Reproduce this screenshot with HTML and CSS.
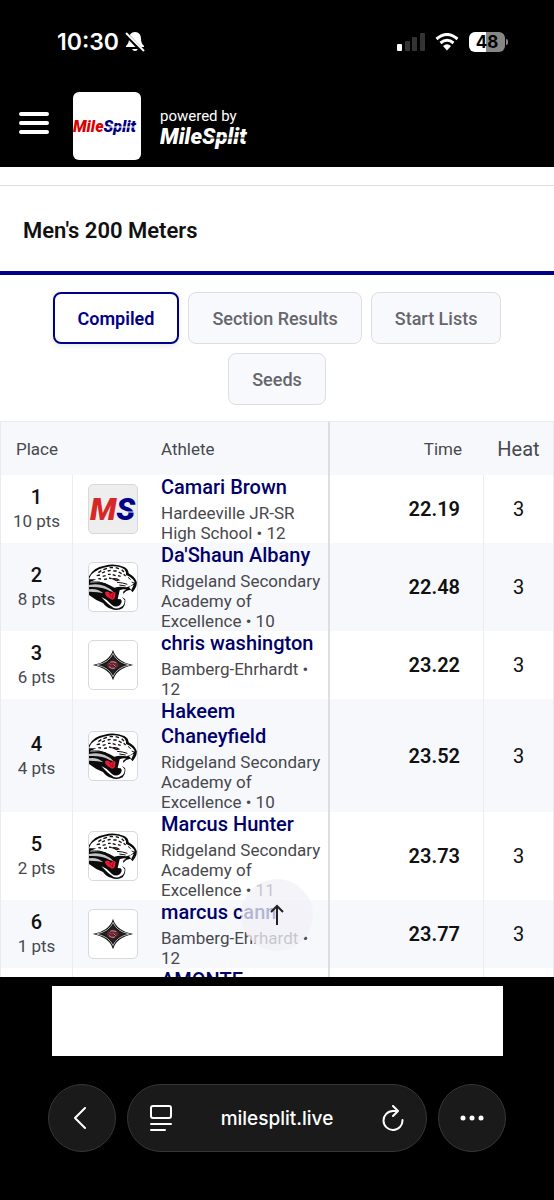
FILE: index.html
```
<!DOCTYPE html>
<html lang="en">

<head>
  <meta charset="UTF-8">
  <meta name="viewport" content="width=device-width, initial-scale=1.0">
  <title>Men's 200 Meters - MileSplit Live</title>
  <link rel="stylesheet" href="styles.css">
</head>

<body>

  <!-- shared logos -->
  <svg class="defs" width="0" height="0" aria-hidden="true">
    <symbol id="jaguar" viewBox="0 0 144 144">
      <path d="M0 40 Q14 12 46 8 Q78 -1 106 12 Q118 18 119 31 Q136 40 143 56 Q145 66 138 77 L131 88 L124 80 L112 84 L103 92 L98 82 L92 98 L108 108 Q112 122 101 136 Q84 145 66 137 Q52 134 42 120 Q20 112 0 96 Z" fill="#0b0b0b"/>
      <path d="M8 34 Q28 15 58 11 Q88 6 106 19 Q113 27 111 36 Q130 43 137 57 Q134 65 124 69 L112 73 Q92 69 76 74 Q48 58 28 58 Q12 60 2 58 L22 49 L0 49 Q4 38 8 34 Z" fill="#fff"/>
      <path d="M0 66 Q26 60 47 69 Q64 76 74 88 L62 84 Q40 70 0 72 Z M0 79 Q24 75 43 91 Q30 86 0 86 Z" fill="#c4c4c4"/>
      <path d="M37 102 Q56 110 68 125 Q80 136 93 126 Q102 116 95 109 L86 108 L92 82 Q105 76 112 80 L104 84 L98 101 L107 112 Q107 128 96 132 Q79 142 67 130 Q55 122 37 102 Z" fill="#fff"/>
      <path d="M48 88 Q58 81 66 93 Q70 84 80 89 L77 106 Q70 114 62 106 Q48 100 48 88 Z" fill="#ee1830"/>
      <path d="M60 91 L68 103 M73 90 L70 106" stroke="#7d0013" stroke-width="2"/>
      <path d="M28 29 l9-6 M43 20 l11-4 M62 14 l10 0 M80 14 l10 3 M98 20 l7 7 M23 38 l10-2 M39 30 l9-4 M56 24 l9-2 M73 24 l10 0 M89 27 l9 5 M41 40 l9-2 M57 34 l8 0 M71 35 l9 3 M87 38 l8 2 M28 47 l8 1 M45 49 l9-1 M60 45 l8 2 M104 34 l6 5" stroke="#111" stroke-width="4" fill="none"/>
      <path d="M66 47 Q80 41 94 52 L82 55 Q76 50 66 47 Z" fill="#111"/>
      <circle cx="82" cy="49" r="3" fill="#c2182b"/>
      <path d="M84 58 Q102 59 115 64 M91 66 L110 69 M117 43 L125 50 M128 57 l7 3 M8 57 Q30 54 51 63" stroke="#111" stroke-width="3" fill="none"/>
      <path d="M120 72 L134 65 L127 81 Z" fill="#fff"/>
    </symbol>
    <symbol id="spartan" viewBox="0 0 144 144">
      <path d="M72 26 Q82 62 133 72 Q82 82 72 118 Q62 82 11 72 Q62 62 72 26 Z" fill="#151515"/>
      <path d="M72 37 Q82 64 121 72 Q82 80 72 107 Q62 80 23 72 Q62 64 72 37 Z" fill="none" stroke="#b5b5b5" stroke-width="3"/>
      <path d="M72 45 Q82 66 105 72 Q82 78 72 99 Q62 78 39 72 Q62 66 72 45 Z" fill="#242024"/>
      <ellipse cx="71" cy="72" rx="17" ry="13" fill="#6d2430"/>
      <path d="M82 65 Q65 59 62 67 Q65 71 75 72 Q84 77 76 82 Q67 84 60 77" fill="none" stroke="#c28b94" stroke-width="3"/>
      <path d="M60 63 L83 82" stroke="#32151c" stroke-width="3"/>
    </symbol>
  </svg>

  <div class="status-bar">
    <div class="status-left">
      <span class="clock">10:30</span>
      <svg width="20" height="22" viewBox="0 0 20 22" aria-hidden="true">
        <path d="M10 1 C6 1 4 4 4 8 C4 11 3 13 1 15 V16 H19 V15 C17 13 16 11 16 8 C16 4 14 1 10 1 Z M7 18 H13 Q12 20 10 20 Q8 20 7 18 Z" fill="#fff"/>
        <path d="M0 2 L18 21" stroke="#000" stroke-width="4"/>
        <path d="M1 2 L19 20" stroke="#fff" stroke-width="2"/>
      </svg>
    </div>
    <div class="status-right">
      <svg width="28" height="18" viewBox="0 0 28 18" aria-hidden="true">
        <rect x="0" y="11" width="5" height="7" rx="1" fill="#fff"/>
        <rect x="8" y="8" width="5" height="10" rx="1" fill="#333"/>
        <rect x="15" y="4" width="5" height="14" rx="1" fill="#333"/>
        <rect x="23" y="0" width="5" height="18" rx="1" fill="#333"/>
      </svg>
      <svg width="24" height="18" viewBox="0 0 24 18" aria-hidden="true">
        <path d="M1.500 6 Q12 -3 22.500 6 M5.500 10 Q12 4.500 18.500 10" fill="none" stroke="#fff" stroke-width="3"/>
        <path d="M8 13 Q12 9.500 16 13 L12 17.500 Z" fill="#fff"/>
      </svg>
      <span class="battery">48</span>
    </div>
  </div>

  <header class="site-header">
    <button class="menu-btn" aria-label="Menu">
      <svg width="30" height="22" viewBox="0 0 30 22">
        <path d="M2 2 H28 M2 11 H28 M2 20 H28" stroke="#fff" stroke-width="4" stroke-linecap="round"/>
      </svg>
    </button>
    <a href="#" class="logo-tile" aria-label="MileSplit home">
      <svg width="68" height="28" viewBox="0 0 68 28">
        <text x="0" y="20" class="logo-small"><tspan fill="#dc0000">Mile</tspan><tspan fill="#00007f">Split</tspan></text>
        <path d="M34 15 H67" stroke="#fff" stroke-width="1"/>
      </svg>
    </a>
    <div class="powered">
      <span class="powered-by">powered by</span>
      <svg width="96" height="28" viewBox="0 0 96 28">
        <text x="0" y="20" class="logo-large">MileSplit</text>
        <path d="M46 14 H90" stroke="#000" stroke-width="1"/>
      </svg>
    </div>
  </header>

  <main class="page">
    <div class="page-scroll">
      <h1>Men's 200 Meters</h1>

      <div class="tabs">
        <button class="tab active">Compiled</button>
        <button class="tab">Section Results</button>
        <button class="tab">Start Lists</button>
        <button class="tab">Seeds</button>
      </div>

      <table class="results">
        <colgroup>
          <col class="col-place">
          <col class="col-logo">
          <col>
          <col class="col-time">
          <col class="col-heat">
        </colgroup>
        <thead>
          <tr>
            <th>Place</th>
            <th></th>
            <th class="athlete">Athlete</th>
            <th class="time">Time</th>
            <th class="heat">Heat</th>
          </tr>
        </thead>
        <tbody>
          <tr>
            <td class="place"><b>1</b><span>10 pts</span></td>
            <td class="logo">
              <svg class="ms" viewBox="0 0 48 48">
                <text x="1" y="35"><tspan fill="#d62828">M</tspan><tspan fill="#00008b">S</tspan></text>
                <path d="M31 27 H46" stroke="#eee" stroke-width="1"/>
              </svg>
            </td>
            <td class="athlete"><a href="#">Camari Brown</a><span>Hardeeville JR-SR High School • 12</span></td>
            <td class="time">22.19</td>
            <td class="heat">3</td>
          </tr>
          <tr>
            <td class="place"><b>2</b><span>8 pts</span></td>
            <td class="logo"><svg><use href="#jaguar"/></svg></td>
            <td class="athlete"><a href="#">Da'Shaun Albany</a><span>Ridgeland Secondary Academy of Excellence • 10</span></td>
            <td class="time">22.48</td>
            <td class="heat">3</td>
          </tr>
          <tr>
            <td class="place"><b>3</b><span>6 pts</span></td>
            <td class="logo"><svg><use href="#spartan"/></svg></td>
            <td class="athlete"><a href="#">chris washington</a><span>Bamberg-Ehrhardt • 12</span></td>
            <td class="time">23.22</td>
            <td class="heat">3</td>
          </tr>
          <tr>
            <td class="place"><b>4</b><span>4 pts</span></td>
            <td class="logo"><svg><use href="#jaguar"/></svg></td>
            <td class="athlete"><a href="#">Hakeem Chaneyfield</a><span>Ridgeland Secondary Academy of Excellence • 10</span></td>
            <td class="time">23.52</td>
            <td class="heat">3</td>
          </tr>
          <tr>
            <td class="place"><b>5</b><span>2 pts</span></td>
            <td class="logo"><svg><use href="#jaguar"/></svg></td>
            <td class="athlete"><a href="#">Marcus Hunter</a><span>Ridgeland Secondary Academy of Excellence • 11</span></td>
            <td class="time">23.73</td>
            <td class="heat">3</td>
          </tr>
          <tr>
            <td class="place"><b>6</b><span>1 pts</span></td>
            <td class="logo"><svg><use href="#spartan"/></svg></td>
            <td class="athlete"><a href="#">marcus cann</a><span>Bamberg-Ehrhardt • 12</span></td>
            <td class="time">23.77</td>
            <td class="heat">3</td>
          </tr>
          <tr>
            <td class="place"></td>
            <td class="logo"></td>
            <td class="athlete"><a href="#">AMONTE</a></td>
            <td class="time"></td>
            <td class="heat"></td>
          </tr>
        </tbody>
      </table>
    </div>

    <button class="to-top" aria-label="Back to top">
      <svg width="14" height="22" viewBox="0 0 14 22">
        <path d="M7 21 V2 M1 8 L7 2 L13 8" fill="none" stroke="#222" stroke-width="2"/>
      </svg>
    </button>
  </main>

  <div class="ad"></div>

  <nav class="browser-bar">
    <button class="round-btn" aria-label="Back">
      <svg width="18" height="22" viewBox="0 0 18 22">
        <path d="M12 1 L2 11 L12 21" fill="none" stroke="#fff" stroke-width="2" stroke-linecap="round" stroke-linejoin="round"/>
      </svg>
    </button>
    <div class="address">
      <button aria-label="Page menu">
        <svg width="22" height="26" viewBox="0 0 22 26">
          <rect x="1" y="1" width="20" height="12" rx="2" fill="none" stroke="#fff" stroke-width="2"/>
          <path d="M1 19 H21 M1 25 H15" stroke="#fff" stroke-width="2" stroke-linecap="round"/>
        </svg>
      </button>
      <span class="url">milesplit.live</span>
      <button aria-label="Reload">
        <svg width="22" height="26" viewBox="0 0 22 26">
          <path d="M15 6 H11 A9.500 9.500 0 1 0 20.500 15" fill="none" stroke="#fff" stroke-width="2" stroke-linecap="round"/>
          <path d="M11 1 L16 6 L11 11" fill="none" stroke="#fff" stroke-width="2" stroke-linecap="round" stroke-linejoin="round"/>
        </svg>
      </button>
    </div>
    <button class="round-btn" aria-label="More">
      <svg width="24" height="6" viewBox="0 0 24 6">
        <circle cx="3" cy="3" r="2.500" fill="#fff"/>
        <circle cx="12" cy="3" r="2.500" fill="#fff"/>
        <circle cx="21" cy="3" r="2.500" fill="#fff"/>
      </svg>
    </button>
  </nav>

</body>

</html>
```
FILE: styles.css
```
* {
  box-sizing: border-box;
}

body {
  margin: 0;
  height: 100vh;
  display: flex;
  flex-direction: column;
  background: #000;
  font-family: Roboto, "Liberation Sans", sans-serif;
  color: #111;
}

button {
  font-family: inherit;
  border: none;
  background: none;
  padding: 0;
  cursor: pointer;
}

a {
  text-decoration: none;
}

svg {
  display: block;
}

.defs {
  position: absolute;
}

/* phone status bar */
.status-bar {
  flex: none;
  height: 84px;
  padding: 0 49px 0 57px;
  display: flex;
  justify-content: space-between;
  align-items: center;
  color: #fff;
}

.status-left,
.status-right {
  display: flex;
  align-items: center;
}

.status-left {
  gap: 6px;
}

.status-right {
  gap: 10px;
}

.clock {
  font-family: Inter, sans-serif;
  font-size: 23px;
  font-weight: 600;
}

.battery {
  position: relative;
  width: 36px;
  height: 20px;
  border-radius: 6px;
  background: linear-gradient(to right, #fff 48%, #868686 48%);
  color: #000;
  font-family: Inter, sans-serif;
  font-size: 17px;
  font-weight: 700;
  line-height: 20px;
  text-align: center;
}

.battery::after {
  content: "";
  position: absolute;
  right: -3px;
  top: 7px;
  width: 2px;
  height: 6px;
  border-radius: 0 2px 2px 0;
  background: #868686;
}

/* site header */
.site-header {
  flex: none;
  height: 83px;
  padding: 0 19px;
  display: flex;
  align-items: center;
  color: #fff;
}

.menu-btn {
  padding-bottom: 5px;
}

.logo-tile {
  width: 68px;
  height: 68px;
  margin: 0 19px 0 24px;
  display: flex;
  align-items: center;
  background: #fff;
  border-radius: 6px;
}

.powered {
  padding-top: 8px;
}

.powered-by {
  display: block;
  font-size: 15px;
  line-height: 16px;
}

.logo-small,
.logo-large,
.ms text {
  font-family: Roboto, sans-serif;
  font-weight: 900;
  font-style: italic;
}

.logo-small {
  font-size: 16px;
}

.logo-large {
  font-size: 22px;
  fill: #fff;
}

.ms text {
  font-size: 31px;
}

/* page content */
.page {
  flex: 1;
  min-height: 0;
  position: relative;
  background: #fff;
}

.page-scroll {
  height: 100%;
  padding-top: 18px;
  overflow: hidden;
}

h1 {
  margin: 0;
  height: 90px;
  padding: 0 23px;
  border-top: 1px solid #ddd;
  border-bottom: 4px solid #00008b;
  font-size: 22px;
  font-weight: 600;
  line-height: 90px;
}

.tabs {
  display: flex;
  flex-wrap: wrap;
  justify-content: center;
  gap: 9px;
  padding: 17px 40px 16px;
}

.tab {
  height: 52px;
  padding: 0 23px;
  border: 1px solid #dedee2;
  border-radius: 8px;
  background: #f8f9fd;
  color: #66666b;
  font-size: 18px;
  font-weight: 500;
}

.tab.active {
  border: 2px solid #00008b;
  background: #fff;
  color: #00008b;
  font-weight: 600;
  box-shadow: 0 3px 6px rgba(0, 0, 0, 0.08);
}

.results {
  width: 100%;
  table-layout: fixed;
  border-collapse: separate;
  border-spacing: 0;
  border-left: 1px solid #ebebef;
  border-right: 1px solid #ebebef;
}

.col-place {
  width: 72px;
}

.col-logo {
  width: 80px;
}

.col-time {
  width: 154px;
}

.col-heat {
  width: 69px;
}

th,
td {
  padding: 0;
}

th {
  height: 54px;
  background: #f7f8fc;
  border-top: 1px solid #ebebef;
  color: #48484d;
  font-size: 17px;
  font-weight: 400;
  text-align: center;
}

tbody tr:nth-child(even) {
  background: #f7f8fc;
}

th.athlete,
td.athlete {
  padding: 0 4px 0 8px;
  border-right: 2px solid #dedee2;
  text-align: left;
}

th.time {
  padding-right: 22px;
  text-align: right;
}

th.heat {
  font-size: 20px;
}

.place {
  border-right: 1px solid #ededf1;
  text-align: center;
}

.place b {
  display: block;
  font-size: 20px;
  font-weight: 500;
  line-height: 24px;
}

.place span {
  display: block;
  color: #48484d;
  font-size: 17px;
  line-height: 24px;
}

.logo svg {
  width: 50px;
  height: 50px;
  margin: 0 auto;
  border: 1px solid #d9d9dd;
  border-radius: 5px;
  background: #fff;
}

.logo .ms {
  background: #eee;
}

.athlete a {
  display: block;
  color: #00006b;
  font-size: 20px;
  font-weight: 500;
  line-height: 25px;
}

.athlete span {
  display: block;
  padding-top: 3px;
  color: #48484d;
  font-size: 17px;
  line-height: 20px;
}

td.time {
  padding-right: 23px;
  border-right: 1px solid #ededf1;
  font-size: 20px;
  font-weight: 600;
  text-align: right;
}

td.heat {
  font-size: 20px;
  text-align: center;
}

.to-top {
  position: absolute;
  left: 50%;
  bottom: 26px;
  width: 72px;
  height: 72px;
  margin-left: -36px;
  display: flex;
  align-items: center;
  justify-content: center;
  border-radius: 50%;
  background: rgba(240, 240, 247, 0.75);
}

.ad {
  flex: none;
  height: 70px;
  margin: 9px 51px 28px 52px;
  background: #fff;
}

/* browser toolbar */
.browser-bar {
  flex: none;
  display: flex;
  gap: 11px;
  padding: 0 48px 48px;
}

.round-btn,
.address {
  height: 68px;
  display: flex;
  align-items: center;
  border: 1px solid #363636;
  border-radius: 34px;
  background: #1a1a1a;
}

.round-btn {
  width: 68px;
  justify-content: center;
}

.address {
  flex: 1;
  justify-content: space-between;
  padding: 0 22px;
}

.url {
  color: #fff;
  font-family: Inter, sans-serif;
  font-size: 19px;
  font-weight: 500;
}
```
